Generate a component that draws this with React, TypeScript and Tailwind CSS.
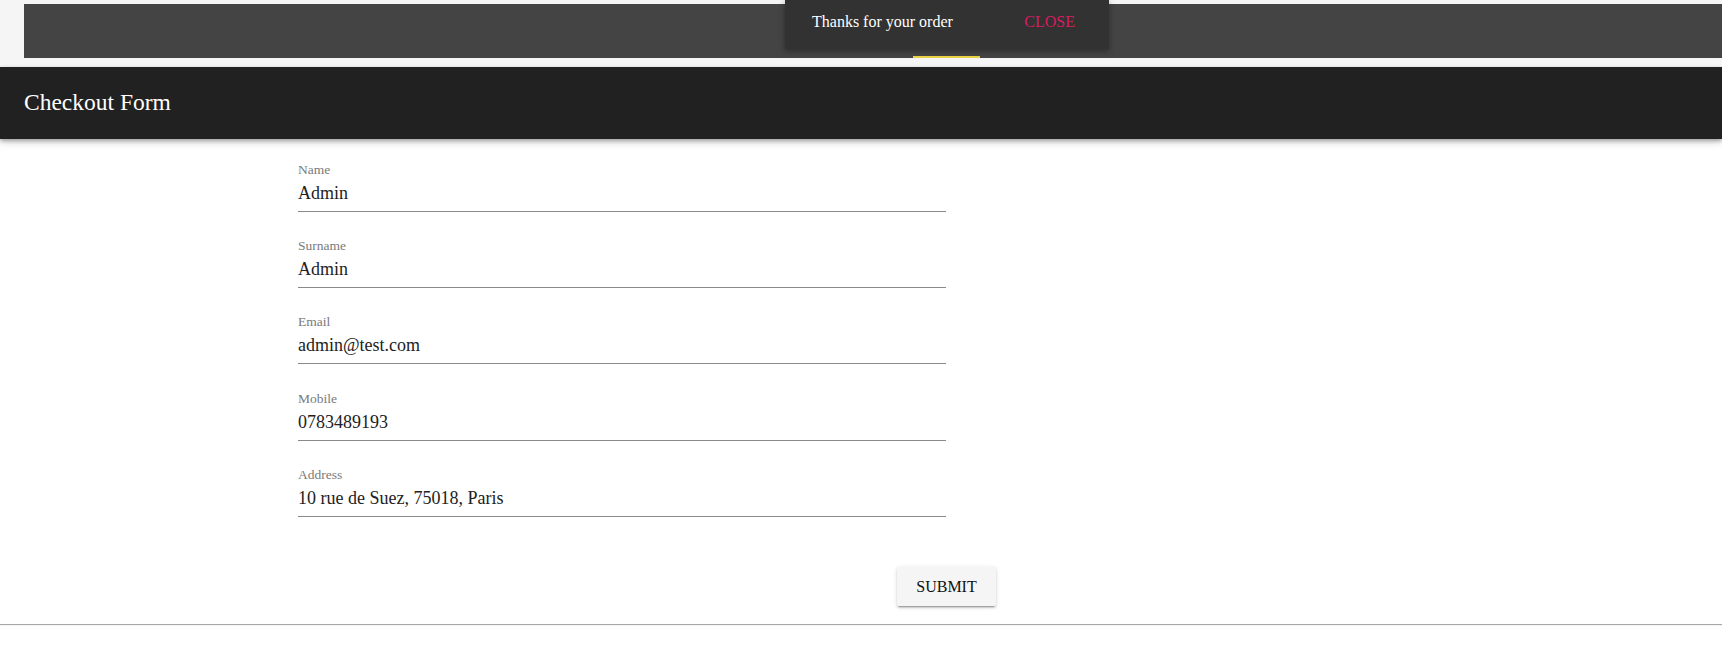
import React from "react";

const fields = [
  { label: "Name", value: "Admin", extra: "" },
  { label: "Surname", value: "Admin", extra: "" },
  { label: "Email", value: "admin@test.com", extra: "" },
  { label: "Mobile", value: "0783489193", extra: "mt-[1px]" },
  { label: "Address", value: "10 rue de Suez, 75018, Paris", extra: "" },
];

export default function App() {
  return (
    <div className="relative min-h-[670px] bg-white font-['Liberation_Serif',serif] overflow-hidden">
      <div className="bg-[#f5f5f5] pt-[4px] pl-[24px] pb-[9px]">
        <div className="relative h-[54px] bg-[#444444]">
          <div className="absolute bottom-0 left-[889px] h-[2px] w-[67px] bg-[#ecd444]" />
        </div>
      </div>

      <header className="flex h-[72px] items-center bg-[#212121] px-[24px] shadow-[0_2px_4px_rgba(0,0,0,0.3),0_4px_8px_rgba(0,0,0,0.12)]">
        <h1 className="text-[23.5px] leading-none text-white">Checkout Form</h1>
      </header>

      <main className="pt-[23px] pl-[298px]">
        <div className="flex w-[648px] flex-col gap-[26px]">
          {fields.map((f) => (
            <div key={f.label} className={`border-b border-[#8a8a8a] pb-[6px] ${f.extra}`}>
              <div className="h-[16px] text-[13.5px] leading-[16px] text-[#7a7a7a]">{f.label}</div>
              <div className="mt-[3px] h-[24px] text-[18px] leading-[24px] text-[#222222]">{f.value}</div>
            </div>
          ))}
        </div>
        <div className="mt-[50px] ml-[599px]">
          <button className="h-[39px] w-[99px] rounded-[2px] bg-[#f5f5f5] text-[16px] leading-none text-[#111111] shadow-[0_2px_2px_rgba(0,0,0,0.14),0_3px_1px_-2px_rgba(0,0,0,0.2),0_1px_5px_rgba(0,0,0,0.12)]">
            SUBMIT
          </button>
        </div>
      </main>

      <div className="mt-[18px] h-px bg-[#a8a8a8] shadow-[0_1px_1px_rgba(0,0,0,0.06)]" />

      <div className="absolute left-[785px] top-0 flex h-[49px] w-[324px] items-center justify-between bg-[#323232] pb-[5px] pl-[27px] pr-[34px] shadow-[0_2px_6px_rgba(0,0,0,0.35)]">
        <span className="text-[16px] leading-none text-white">Thanks for your order</span>
        <span className="text-[16px] leading-none text-[#d81b60]">CLOSE</span>
      </div>
    </div>
  );
}
